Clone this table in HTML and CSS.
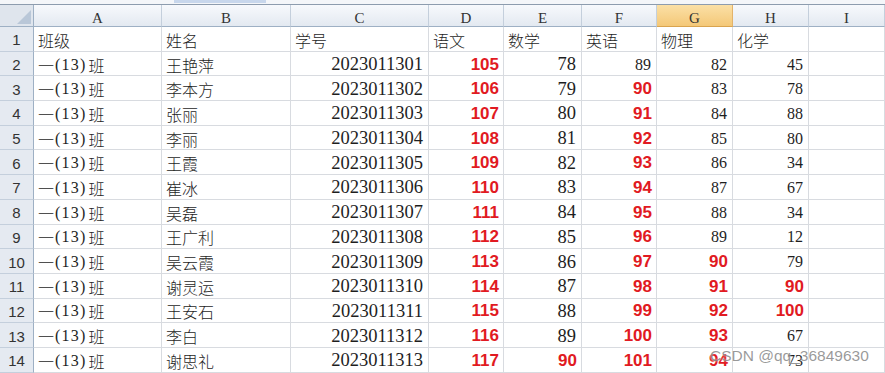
FILE: index.html
```html
<!DOCTYPE html>
<html lang="zh">
<head>
<meta charset="utf-8">
<title>Sheet</title>
<link rel="stylesheet" href="styles.css">
</head>
<body>
<div class="top"><div class="bar"></div></div>
<div class="sheet">
  <div class="corner"><svg width="33" height="21" viewBox="0 0 33 21"><polygon points="17,19 31,19 31,5" fill="#b9c7d8"/></svg></div>
  <div class="ch">A</div><div class="ch">B</div><div class="ch">C</div><div class="ch">D</div><div class="ch">E</div><div class="ch">F</div><div class="ch sel">G</div><div class="ch">H</div><div class="ch">I</div>

  <div class="rh">1</div><div class="c t">班级</div><div class="c t">姓名</div><div class="c t">学号</div><div class="c t">语文</div><div class="c t">数学</div><div class="c t">英语</div><div class="c t">物理</div><div class="c t">化学</div><div class="c"></div>

  <div class="rh">2</div><div class="c t">一<span class="p">(13)</span>班</div><div class="c t">王艳萍</div><div class="c n">2023011301</div><div class="c n r">105</div><div class="c n b">78</div><div class="c n s">89</div><div class="c n s">82</div><div class="c n s">45</div><div class="c"></div>
  <div class="rh">3</div><div class="c t">一<span class="p">(13)</span>班</div><div class="c t">李本方</div><div class="c n">2023011302</div><div class="c n r">106</div><div class="c n b">79</div><div class="c n r">90</div><div class="c n s">83</div><div class="c n s">78</div><div class="c"></div>
  <div class="rh">4</div><div class="c t">一<span class="p">(13)</span>班</div><div class="c t">张丽</div><div class="c n">2023011303</div><div class="c n r">107</div><div class="c n b">80</div><div class="c n r">91</div><div class="c n s">84</div><div class="c n s">88</div><div class="c"></div>
  <div class="rh">5</div><div class="c t">一<span class="p">(13)</span>班</div><div class="c t">李丽</div><div class="c n">2023011304</div><div class="c n r">108</div><div class="c n b">81</div><div class="c n r">92</div><div class="c n s">85</div><div class="c n s">80</div><div class="c"></div>
  <div class="rh">6</div><div class="c t">一<span class="p">(13)</span>班</div><div class="c t">王霞</div><div class="c n">2023011305</div><div class="c n r">109</div><div class="c n b">82</div><div class="c n r">93</div><div class="c n s">86</div><div class="c n s">34</div><div class="c"></div>
  <div class="rh">7</div><div class="c t">一<span class="p">(13)</span>班</div><div class="c t">崔冰</div><div class="c n">2023011306</div><div class="c n r">110</div><div class="c n b">83</div><div class="c n r">94</div><div class="c n s">87</div><div class="c n s">67</div><div class="c"></div>
  <div class="rh">8</div><div class="c t">一<span class="p">(13)</span>班</div><div class="c t">吴磊</div><div class="c n">2023011307</div><div class="c n r">111</div><div class="c n b">84</div><div class="c n r">95</div><div class="c n s">88</div><div class="c n s">34</div><div class="c"></div>
  <div class="rh">9</div><div class="c t">一<span class="p">(13)</span>班</div><div class="c t">王广利</div><div class="c n">2023011308</div><div class="c n r">112</div><div class="c n b">85</div><div class="c n r">96</div><div class="c n s">89</div><div class="c n s">12</div><div class="c"></div>
  <div class="rh">10</div><div class="c t">一<span class="p">(13)</span>班</div><div class="c t">吴云霞</div><div class="c n">2023011309</div><div class="c n r">113</div><div class="c n b">86</div><div class="c n r">97</div><div class="c n r">90</div><div class="c n s">79</div><div class="c"></div>
  <div class="rh">11</div><div class="c t">一<span class="p">(13)</span>班</div><div class="c t">谢灵运</div><div class="c n">2023011310</div><div class="c n r">114</div><div class="c n b">87</div><div class="c n r">98</div><div class="c n r">91</div><div class="c n r">90</div><div class="c"></div>
  <div class="rh">12</div><div class="c t">一<span class="p">(13)</span>班</div><div class="c t">王安石</div><div class="c n">2023011311</div><div class="c n r">115</div><div class="c n b">88</div><div class="c n r">99</div><div class="c n r">92</div><div class="c n r">100</div><div class="c"></div>
  <div class="rh">13</div><div class="c t">一<span class="p">(13)</span>班</div><div class="c t">李白</div><div class="c n">2023011312</div><div class="c n r">116</div><div class="c n b">89</div><div class="c n r">100</div><div class="c n r">93</div><div class="c n s">67</div><div class="c"></div>
  <div class="rh">14</div><div class="c t">一<span class="p">(13)</span>班</div><div class="c t">谢思礼</div><div class="c n">2023011313</div><div class="c n r">117</div><div class="c n r">90</div><div class="c n r">101</div><div class="c n r">94</div><div class="c n s">73</div><div class="c"></div>
</div>
<div class="wm">CSDN @qq_36849630</div>
</body>
</html>
```

FILE: styles.css
```css
html, body {
  margin: 0;
  padding: 0;
  background: #fff;
  overflow: hidden;
}
body {
  position: relative;
  width: 885px;
  height: 373px;
  font-family: "Liberation Serif", "Noto Sans CJK SC", serif;
  color: #1e1e1e;
}
.top {
  height: 4px;
  border-bottom: 1px solid #8d9cae;
  display: flex;
  background: #f4f6f9;
}
.top .bar {
  margin-left: 174px;
  width: 92px;
  height: 3px;
  background: #c8d7ec;
}
.sheet {
  display: grid;
  grid-template-columns: 34px 128px 129px 138px 75px 78px 75px 76px 76px 76px;
  grid-template-rows: 22px;
  grid-auto-rows: 24.7px;
}
.corner {
  box-sizing: border-box;
  background: #dfe5ed;
  border-right: 1px solid #9eb0c4;
  border-bottom: 1px solid #9eb0c4;
  display: flex;
}
.corner svg { display: block; }
.ch {
  box-sizing: border-box;
  background: linear-gradient(#f7f9fc, #e3e9f1);
  border-right: 1px solid #c4cfdc;
  border-bottom: 1px solid #9eb0c4;
  display: flex;
  align-items: center;
  justify-content: center;
  font-family: "Liberation Serif", serif;
  font-size: 15px;
  color: #333;
  padding-top: 5px;
}
.ch.sel {
  background: linear-gradient(#fbe0a6, #f4c878);
  border-right-color: #e3b36a;
  border-bottom-color: #d9a44f;
}
.rh {
  box-sizing: border-box;
  background: #e5eaf1;
  border-right: 1px solid #9eb0c4;
  border-bottom: 1px solid #c4cfdc;
  display: flex;
  align-items: center;
  justify-content: center;
  font-family: "Liberation Sans", sans-serif;
  font-size: 15px;
  color: #333;
  padding-top: 2px;
}
.c {
  box-sizing: border-box;
  border-right: 1px solid #d8dbe0;
  border-bottom: 1px solid #d8dbe0;
  display: flex;
  align-items: center;
  white-space: nowrap;
  overflow: hidden;
  padding-top: 2px;
}
.t {
  padding-left: 4px;
  font-size: 16px;
  font-weight: 300;
}
.t .p {
  letter-spacing: 1.2px;
  padding-left: 1px;
  padding-right: 2px;
  font-weight: 400;
}
.n {
  justify-content: flex-end;
  padding-right: 5px;
  font-size: 18.5px;
}
.n.b { font-size: 18.5px; }
.n.s { font-size: 16px; }
.n.r {
  font-family: "Liberation Sans", sans-serif;
  font-weight: bold;
  font-size: 17px;
  color: #e11a22;
  padding-right: 4px;
}
.wm {
  position: absolute;
  left: 710px;
  top: 347px;
  font-family: "Liberation Sans", sans-serif;
  font-size: 15.5px;
  color: rgba(120, 120, 120, 0.75);
  text-shadow: 0 0 2px rgba(255, 255, 255, 0.9);
  white-space: nowrap;
}
```
